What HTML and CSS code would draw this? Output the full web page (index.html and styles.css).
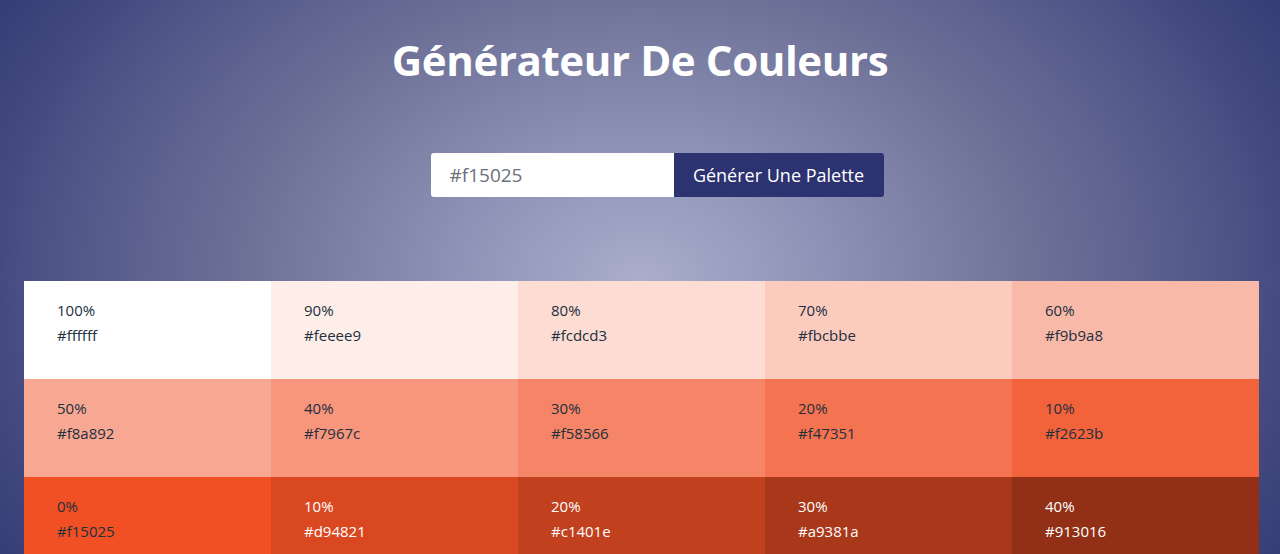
FILE: index.html
```html
<!DOCTYPE html>
<html lang="fr">
<head>
<meta charset="utf-8">
<title>Générateur De Couleurs</title>
<link rel="stylesheet" href="styles.css">
</head>
<body>
<header class="hero">
  <h1 class="title">Générateur De Couleurs</h1>
  <form class="picker">
    <input class="picker-input" type="text" value="#f15025">
    <button class="picker-btn" type="button">Générer Une Palette</button>
  </form>
</header>
<section class="palette">
  <div class="swatch" style="background:#ffffff"><p>100%</p><p>#ffffff</p></div>
  <div class="swatch" style="background:#feeee9"><p>90%</p><p>#feeee9</p></div>
  <div class="swatch" style="background:#fcdcd3"><p>80%</p><p>#fcdcd3</p></div>
  <div class="swatch" style="background:#fbcbbe"><p>70%</p><p>#fbcbbe</p></div>
  <div class="swatch" style="background:#f9b9a8"><p>60%</p><p>#f9b9a8</p></div>
  <div class="swatch" style="background:#f8a892"><p>50%</p><p>#f8a892</p></div>
  <div class="swatch" style="background:#f7967c"><p>40%</p><p>#f7967c</p></div>
  <div class="swatch" style="background:#f58566"><p>30%</p><p>#f58566</p></div>
  <div class="swatch" style="background:#f47351"><p>20%</p><p>#f47351</p></div>
  <div class="swatch" style="background:#f2623b"><p>10%</p><p>#f2623b</p></div>
  <div class="swatch" style="background:#f15025"><p>0%</p><p>#f15025</p></div>
  <div class="swatch light" style="background:#d94821"><p>10%</p><p>#d94821</p></div>
  <div class="swatch light" style="background:#c1401e"><p>20%</p><p>#c1401e</p></div>
  <div class="swatch light" style="background:#a9381a"><p>30%</p><p>#a9381a</p></div>
  <div class="swatch light" style="background:#913016"><p>40%</p><p>#913016</p></div>
  <div class="swatch light" style="background:#792813"><p>50%</p><p>#792813</p></div>
  <div class="swatch light" style="background:#60200f"><p>60%</p><p>#60200f</p></div>
  <div class="swatch light" style="background:#48180b"><p>70%</p><p>#48180b</p></div>
  <div class="swatch light" style="background:#301007"><p>80%</p><p>#301007</p></div>
  <div class="swatch light" style="background:#180804"><p>90%</p><p>#180804</p></div>
  <div class="swatch light" style="background:#000000"><p>100%</p><p>#000000</p></div>
</section>
</body>
</html>
```
FILE: styles.css
```css
* { box-sizing: border-box; }
html {
  background-color: #353d75;
  background-image: radial-gradient(ellipse 746px 545px at 640px 280px, #aaaecb 0%, #8e92b6 25%, #6f7399 51.5%, #4b5185 82%, #454b80 86%, #353d75 100%);
  background-repeat: no-repeat;
}
body {
  margin: 0;
  font-family: "Open Sans", "Noto Sans", sans-serif;
  color: #222f3e;
}
.hero {
  display: flex;
  flex-direction: column;
  align-items: center;
  padding-top: 31px;
}
.title {
  margin: 0;
  color: #ffffff;
  font-size: 42px;
  font-weight: 700;
  letter-spacing: -0.4px;
  line-height: 58px;
}
.picker {
  display: flex;
  margin: 64px 0 0 34px;
  height: 44px;
}
.picker-input {
  width: 243px;
  height: 44px;
  border: none;
  border-radius: 3px 0 0 3px;
  padding: 0 19px;
  font-family: inherit;
  font-size: 19px;
  color: #6b6f7a;
  background: #ffffff;
  outline: none;
}
.picker-btn {
  width: 210px;
  height: 44px;
  border: none;
  border-radius: 0 3px 3px 0;
  background: #2d3270;
  color: #ffffff;
  font-family: inherit;
  font-size: 18px;
  padding: 0;
  cursor: pointer;
}
.palette {
  display: grid;
  grid-template-columns: repeat(5, 247px);
  margin: 84px 0 0 24px;
}
.swatch {
  height: 98px;
  padding: 17px 0 0 33px;
  font-size: 15px;
  line-height: 25px;
  color: #222f3e;
}
.swatch p { margin: 0; }
.swatch.light { color: #ffffff; }
```
